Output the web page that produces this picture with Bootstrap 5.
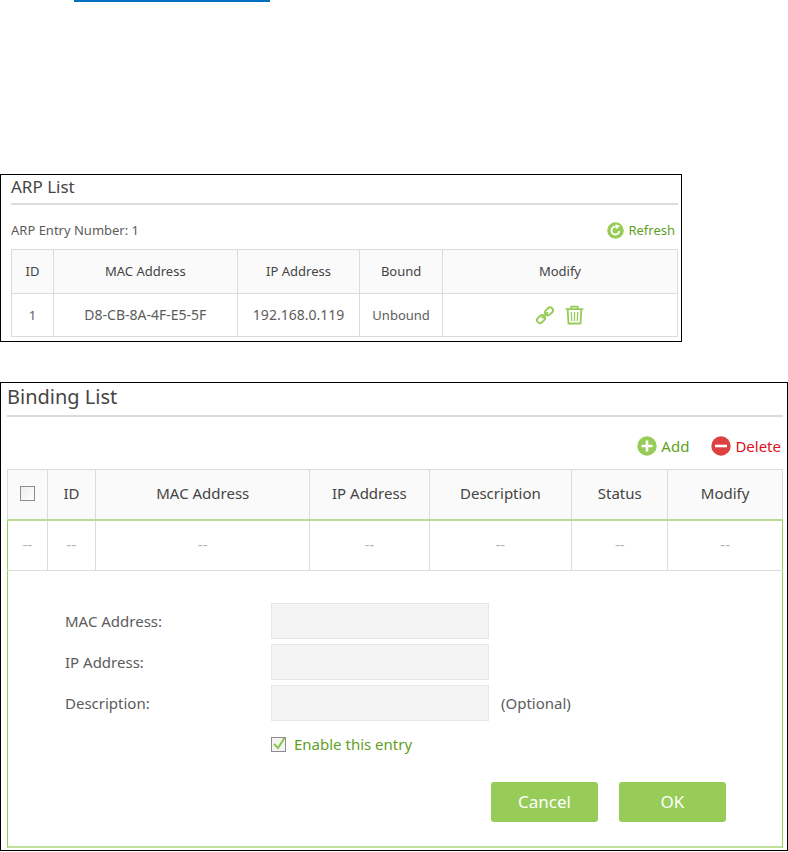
<!DOCTYPE html>
<html lang="en">
<head>
<meta charset="utf-8">
<meta name="viewport" content="width=device-width, initial-scale=1">
<title>ARP List and Binding List</title>
<link href="https://cdn.jsdelivr.net/npm/bootstrap@5.3.0/dist/css/bootstrap.min.css" rel="stylesheet">
<style>
  body { font-family: "Noto Sans", "Liberation Sans", sans-serif; background: #fff; color: #5c5c5c; }
  .page-top { height: 174px; padding-left: 74px; }
  .page-rule { width: 196px; height: 2px; background: #0070c0; }
  .panel { border: 1px solid #000; background: #fff; }
  .panel-arp { max-width: 682px; padding: 0 3px 4px 10px; font-size: 13px; line-height: 20px; }
  .panel-bind { margin-top: 40px; padding: 0 4px 2px 6px; font-size: 15px; line-height: 20px; }
  .panel-title { margin: 0; color: #454545; font-weight: 400; border-bottom: 2px solid #dcdcdc; }
  .panel-arp .panel-title { font-size: 17px; line-height: 24px; padding-bottom: 4px; }
  .panel-bind .panel-title { font-size: 20px; line-height: 28px; padding-bottom: 4px; }
  .bar-arp { height: 44px; padding: 15px 3px 0 0; }
  .bar-bind { height: 52px; padding: 19px 2px 0 0; gap: 22px; }
  .tool { border: 0; background: none; padding: 0; color: #5f9f1f; }
  .tool-del { color: #e0101c; }
  .grid-table { table-layout: fixed; width: 100%; border-collapse: collapse; text-align: center; }
  .grid-table th { font-weight: 400; color: #444; background: #fafafa; }
  .grid-table th, .grid-table td { border: 1px solid #dcdcdc; padding: 0; }
  .grid-table th { padding-bottom: 2px; }
  .panel-arp th { height: 44px; }
  .panel-arp td { height: 43px; }
  .panel-arp .addr { font-size: 14px; }
  .panel-bind th { height: 50px; }
  .panel-bind td { height: 51px; padding-bottom: 2px; color: #b4b4b4; }
  .panel-bind tbody td { border-top: 2px solid #b9dd90; }
  .panel-bind tbody td:first-child { border-left-color: #98cc58; }
  .panel-bind tbody td:last-child { border-right-color: #98cc58; }
  .entry-form { border: 1px solid #98cc58; border-top: 0; border-bottom: 2px solid #c0e09b; padding: 32px 56px 24px 57px; }
  .entry-row { display: grid; grid-template-columns: 206px 218px 1fr; align-items: center; margin-bottom: 5px; }
  .entry-box { height: 36px; width: 100%; border: 1px solid #e6e6e6; background: #f4f4f4; padding: 0 8px; color: #5c5c5c; }
  .check { appearance: none; width: 15px; height: 15px; margin: 0; border: 1px solid #8c8c8c; background: linear-gradient(135deg, #eee, #fff); }
  .check-on { background: #f4f4f4 url("data:image/svg+xml,%3Csvg xmlns='http://www.w3.org/2000/svg' viewBox='0 0 13 13'%3E%3Cpath d='M2 6l4 4 6.500-10' fill='none' stroke='%2388c540' stroke-width='2'/%3E%3C/svg%3E") center / 100% no-repeat; }
  .enable { margin-left: 206px; padding-top: 8px; color: #5f9f1f; }
  .actions { gap: 21px; margin-top: 28px; }
  .act { width: 107px; height: 40px; border: 0; border-radius: 3px; background: #98cc58; color: #fff; font-size: 17px; }
</style>
<script src="https://cdn.jsdelivr.net/npm/bootstrap@5.3.0/dist/js/bootstrap.bundle.min.js" defer></script>
</head>
<body>
<div class="page-top"><div class="page-rule"></div></div>
<main>
  <section class="panel panel-arp">
    <h2 class="panel-title">ARP List</h2>
    <div class="bar-arp d-flex justify-content-between align-items-start">
      <div>ARP Entry Number: 1</div>
      <button type="button" class="tool d-flex align-items-center">
        <svg class="me-1" width="17" height="17" viewBox="0 0 17 17" aria-hidden="true"><circle cx="8.500" cy="8.500" r="8.300" fill="#98cc58"/><path d="M12.300 9a3.900 3.900 0 1 1-3.500-4.300" fill="none" stroke="#fff" stroke-width="1.900"/><path d="M8.300 2.300l4.600 1.400-3.300 3.600z" fill="#fff"/></svg>
        Refresh
      </button>
    </div>
    <table class="grid-table">
      <colgroup><col style="width:6.3%"><col style="width:27.6%"><col style="width:18.4%"><col style="width:12.4%"><col style="width:35.3%"></colgroup>
      <thead><tr><th>ID</th><th>MAC Address</th><th>IP Address</th><th>Bound</th><th>Modify</th></tr></thead>
      <tbody><tr><td>1</td><td class="addr">D8-CB-8A-4F-E5-5F</td><td class="addr">192.168.0.119</td><td>Unbound</td>
        <td>
          <div class="d-flex justify-content-center align-items-center">
            <button type="button" class="tool d-flex me-2" aria-label="Bind">
              <svg width="22" height="20" viewBox="0 0 22 20" aria-hidden="true"><g fill="none" stroke="#98cc58" stroke-width="2"><rect x="-4.300" y="-2.900" width="8.600" height="5.800" rx="2.900" transform="translate(6 14.200) rotate(-43)"/><rect x="-4.300" y="-2.900" width="8.600" height="5.800" rx="2.900" transform="translate(14 6.300) rotate(-43)"/><path d="M7 13.200l6-5.900"/></g></svg>
            </button>
            <button type="button" class="tool d-flex" aria-label="Delete entry">
              <svg width="19" height="20" viewBox="0 0 19 20" aria-hidden="true"><g fill="none" stroke="#98cc58" stroke-width="1.800"><path d="M.7 4.100h17.600M6.300 4V1.700h6.400V4M2.700 4.500l.8 14h12l.8-14"/><path stroke-width="1.300" d="M6.300 7l.4 9M9.500 7v9M12.700 7l-.4 9"/></g></svg>
            </button>
          </div>
        </td></tr></tbody>
    </table>
  </section>

  <section class="panel panel-bind">
    <h2 class="panel-title">Binding List</h2>
    <div class="bar-bind d-flex justify-content-end align-items-start">
      <button type="button" class="tool d-flex align-items-center">
        <svg class="me-1" width="20" height="20" viewBox="0 0 20 20" aria-hidden="true"><circle cx="10" cy="10" r="9.700" fill="#98cc58"/><path d="M10 4.500v11M4.500 10h11" stroke="#fff" stroke-width="2.600"/></svg>
        Add
      </button>
      <button type="button" class="tool tool-del d-flex align-items-center">
        <svg class="me-1" width="20" height="20" viewBox="0 0 20 20" aria-hidden="true"><circle cx="10" cy="10" r="9.700" fill="#dc4040"/><path d="M4 10h12" stroke="#fff" stroke-width="2.600"/></svg>
        Delete
      </button>
    </div>
    <table class="grid-table">
      <colgroup><col style="width:5.1%"><col style="width:6.3%"><col style="width:27.6%"><col style="width:15.4%"><col style="width:18.4%"><col style="width:12.4%"><col style="width:14.8%"></colgroup>
      <thead><tr><th><input type="checkbox" class="check d-block mx-auto" aria-label="Select all"></th><th>ID</th><th>MAC Address</th><th>IP Address</th><th>Description</th><th>Status</th><th>Modify</th></tr></thead>
      <tbody><tr><td>--</td><td>--</td><td>--</td><td>--</td><td>--</td><td>--</td><td>--</td></tr></tbody>
    </table>
    <form class="entry-form">
      <div class="entry-row"><label for="mac">MAC Address:</label><input class="entry-box" type="text" id="mac"></div>
      <div class="entry-row"><label for="ip">IP Address:</label><input class="entry-box" type="text" id="ip"></div>
      <div class="entry-row"><label for="desc">Description:</label><input class="entry-box" type="text" id="desc"><span class="ms-2 ps-1">(Optional)</span></div>
      <div class="enable d-flex align-items-center"><input type="checkbox" class="check check-on" id="enable" checked><label class="ms-2" for="enable">Enable this entry</label></div>
      <div class="actions d-flex justify-content-end"><button type="button" class="act">Cancel</button><button type="button" class="act">OK</button></div>
    </form>
  </section>
</main>
</body>
</html>
